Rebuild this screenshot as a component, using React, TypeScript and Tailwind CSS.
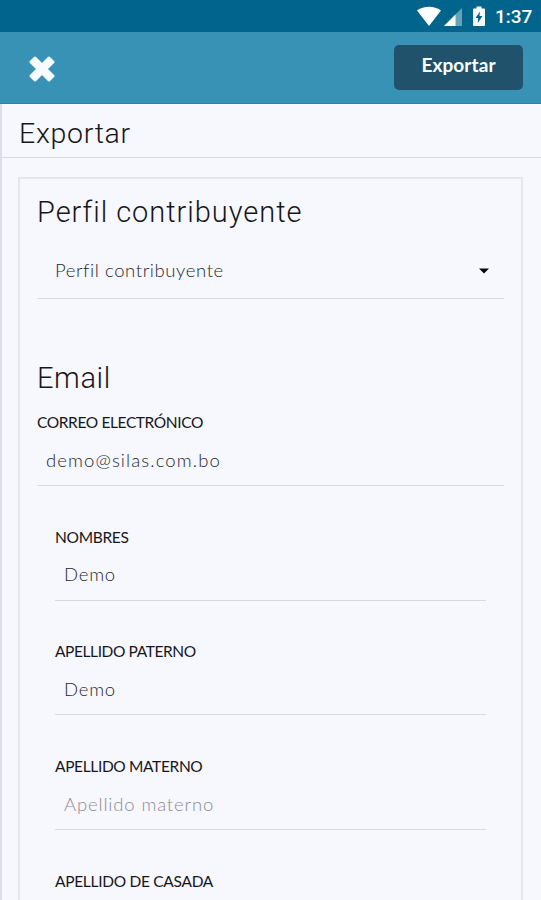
import { FC } from "react";

interface FieldProps {
  label: string;
  labelClass: string;
  value?: string;
  valueClass?: string;
  placeholder?: string;
}

const Field: FC<FieldProps> = ({
  label,
  labelClass,
  value,
  valueClass,
  placeholder,
}) => (
  <div className="h-[114.7px]">
    <label
      className={`block h-5 text-[15.5px] leading-5 whitespace-nowrap text-[#16161a] ${labelClass}`}
    >
      {label}
    </label>
    {(value || placeholder) && (
      <div
        className={`flex h-[54px] items-center border-b border-[#d9dae0] pt-[4px] pl-[9px] text-[18.5px] font-light whitespace-nowrap ${
          value ? "text-[#26272b]" : "text-[#8c8d92]"
        } `}
      >
        <span className={valueClass}>{value || placeholder}</span>
      </div>
    )}
  </div>
);

const StatusBar: FC = () => (
  <div className="flex h-8 items-center justify-end bg-[#00648c] text-white">
    <svg width="75" height="32" viewBox="0 0 75 32" fill="currentColor">
      <path d="M0 10.5C7 5.6 17 5.6 24 10.5L12 26Z" />
      <path d="M45 8V26H27Z" opacity=".4" />
      <path d="M38.5 14.5V26H27Z" />
      <path d="M59.5 6.500h5v2h2.500q1 0 1 1v15.500q0 1-1 1h-10q-1 0-1-1v-15.500q0-1 1-1h2.500Z" />
      <path d="M63 11.500l-4.500 6.500h2.700l-.5 5 4.800-7h-3Z" fill="#00648c" />
    </svg>
    <span className="mr-[9px] ml-[3px] w-[37px] pt-[2px] text-right font-['Roboto',sans-serif] text-[19px] font-medium whitespace-nowrap">
      1:37
    </span>
  </div>
);

const App: FC = () => {
  return (
    <div className="flex h-[900px] w-[541px] flex-col overflow-hidden bg-[#f7f7fe] font-['Lato',sans-serif]">
      <StatusBar />

      <header className="flex h-[72px] shrink-0 items-center justify-between border-b border-[#2484a8] bg-[#3892b6] pr-[18px] pl-[29px]">
        <button type="button" aria-label="Cerrar">
          <svg
            width="26"
            height="26"
            viewBox="0 0 26 26"
            fill="#f7faff"
            stroke="#f7faff"
            strokeWidth="3"
            strokeLinejoin="round"
            className="mt-[3px]"
          >
            <path d="M6 2L13 9L20 2L24 6L17 13L24 20L20 24L13 17L6 24L2 20L9 13L2 6Z" />
          </svg>
        </button>
        <button
          type="button"
          className="h-[45px] w-[129px] rounded-[5px] bg-[#21526b] pb-1 text-[19px] font-bold text-white"
        >
          <span className="tracking-[0.1px]">Exportar</span>
        </button>
      </header>

      <main className="flex min-h-0 flex-1 flex-col border-l-2 border-[#dcdde8]">
        <h1 className="h-[54px] shrink-0 border-b border-[#d9dae0] pt-[10px] pl-[17px] font-['Roboto',sans-serif] text-[28.5px] leading-10 font-light text-[#16161a]">
          <span className="tracking-[0.7px]">Exportar</span>
        </h1>

        <section className="mt-[19px] mr-[18px] ml-4 h-[760px] shrink-0 border-2 border-[#e6e7ed] px-[17px]">
          <h2 className="pt-[13px] font-['Roboto',sans-serif] text-[29px] leading-10 font-light whitespace-nowrap text-[#16161a]">
            <span className="tracking-[0.97px]">Perfil contribuyente</span>
          </h2>
          <div className="mt-[13px] flex h-[54px] items-center justify-between border-b border-[#d9dae0] pr-[15px] pb-px pl-[18px] text-[18.5px] font-light text-[#26272b]">
            <span className="tracking-[0.6px]">Perfil contribuyente</span>
            <svg width="10" height="6" viewBox="0 0 10 6" fill="#08080c">
              <path d="M0 .5H10L5 5.500Z" />
            </svg>
          </div>

          <h2 className="mt-[59px] mb-[14px] font-['Roboto',sans-serif] text-[29px] leading-10 font-light text-[#16161a]">
            <span className="tracking-[0.6px]">Email</span>
          </h2>
          <Field
            label="CORREO ELECTRÓNICO"
            labelClass="tracking-[-0.38px]"
            value="demo@silas.com.bo"
            valueClass="tracking-[1.1px]"
          />
          <div className="px-[18px]">
            <Field
              label="NOMBRES"
              labelClass="tracking-[-0.3px]"
              value="Demo"
              valueClass="tracking-[0.8px]"
            />
            <Field
              label="APELLIDO PATERNO"
              labelClass="tracking-[-0.4px]"
              value="Demo"
              valueClass="tracking-[0.8px]"
            />
            <Field
              label="APELLIDO MATERNO"
              labelClass="tracking-[-0.35px]"
              placeholder="Apellido materno"
              valueClass="tracking-[0.85px]"
            />
            <Field label="APELLIDO DE CASADA" labelClass="tracking-[-0.3px]" />
          </div>
        </section>
      </main>
    </div>
  );
};

export default App;
